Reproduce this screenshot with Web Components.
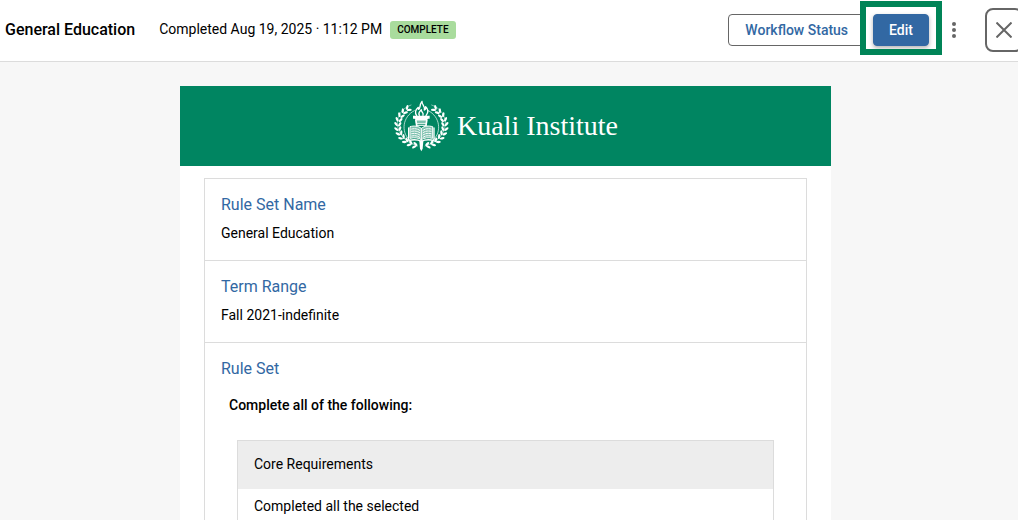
<!DOCTYPE html>
<html lang="en">
<head>
<meta charset="utf-8">
<meta name="viewport" content="width=device-width, initial-scale=1">
<title>General Education</title>
<style>
body {
	margin: 0;
	min-height: 100vh;
	background: #f7f7f7;
	color: #000;
	font: 14px/21px Roboto, "Liberation Sans", sans-serif;
	overflow-x: hidden;
}
</style>
</head>
<body>
<ku-app></ku-app>

<script>
const define = (name, html, setup) => {
	const template = document.createElement('template');
	template.innerHTML = html;

	window.customElements.define(name, class extends HTMLElement {
		connectedCallback() {
			if (!this.shadowRoot) {
				this.attachShadow({ mode: 'open' });
				this.shadowRoot.appendChild(template.content.cloneNode(true));
				setup?.call(this, this.shadowRoot);
			}
		}
	});
};

define('ku-badge', `
<style>
:host {
	display: block;
	padding: 0 7px;
	border-radius: 3px;
	background: #a9dc9d;
	font-size: 10px;
	font-weight: 500;
	line-height: 18px;
}
</style>
<slot></slot>
`);

define('ku-button', `
<style>
:host {
	display: block;
}

button {
	box-sizing: border-box;
	display: block;
	height: 32px;
	padding: 0 16px;
	border: 1px solid #666;
	border-radius: 4px;
	background: #fff;
	color: #3268a3;
	font: inherit;
	font-weight: 500;
	line-height: 30px;
	white-space: nowrap;
	cursor: pointer;
}

:host([primary]) button {
	padding: 0 15px;
	border-color: #3268a3;
	background: #3268a3;
	color: #fff;
	box-shadow: 0 2px 4px rgba(0, 0, 0, .3);
}
</style>
<button type="button"><slot></slot></button>
`);

define('ku-highlight', `
<style>
:host {
	display: block;
	position: relative;
}

/* Frame drawn over whatever is next to the highlighted control */
:host::after {
	content: '';
	position: absolute;
	inset: -13px -13px -9px;
	border: 6px solid #008457;
	pointer-events: none;
}
</style>
<slot></slot>
`);

define('ku-icon-button', `
<style>
:host {
	display: block;
}

button {
	display: flex;
	align-items: center;
	justify-content: center;
	box-sizing: border-box;
	width: 24px;
	height: 44px;
	padding: 0;
	border: 0;
	background: none;
	color: #666;
	cursor: pointer;
}

:host([outlined]) button {
	width: 38px;
	border: 2px solid #666;
	border-radius: 8px;
}
</style>
<button type="button"><slot></slot></button>
`, function (root) {
	root.querySelector('button').setAttribute('aria-label', this.getAttribute('label'));
});

define('ku-toolbar', `
<style>
:host {
	display: flex;
	align-items: center;
	box-sizing: border-box;
	height: 62px;
	padding: 0 0 2px 5px;
	border-bottom: 1px solid #dcdcdc;
	background: #fff;
	overflow: hidden;
}

h1 {
	margin: 0 24px 0 0;
	font-size: 16px;
	font-weight: 500;
	white-space: nowrap;
}

.status,
.actions {
	display: flex;
	align-items: center;
	gap: 8px;
	white-space: nowrap;
}

.actions {
	margin-left: auto;
	margin-right: -5px;
}

.close {
	margin-left: 11px;
}

.menu {
	margin-left: 5px;
}
</style>
<h1>General Education</h1>
<div class="status">
	<span>Completed Aug 19, 2025 · 11:12 PM</span>
	<ku-badge>COMPLETE</ku-badge>
</div>
<div class="actions">
	<ku-button>Workflow Status</ku-button>
	<ku-highlight><ku-button primary>Edit</ku-button></ku-highlight>
	<ku-icon-button class="menu" label="More actions">
		<svg width="4" height="16" viewBox="0 0 4 16" fill="currentColor">
			<circle cx="2" cy="2" r="2"/>
			<circle cx="2" cy="8" r="2"/>
			<circle cx="2" cy="14" r="2"/>
		</svg>
	</ku-icon-button>
	<ku-icon-button class="close" label="Close" outlined>
		<svg width="16" height="16" viewBox="0 0 16 16" fill="none" stroke="currentColor" stroke-width="2">
			<path d="M.5.5l15 15M15.5.5l-15 15"/>
		</svg>
	</ku-icon-button>
</div>
`);

define('ku-crest', `
<style>
:host {
	display: block;
}

svg {
	display: block;
}
</style>
<svg width="56" height="52" viewBox="22 30 168 156" fill="none" stroke="#fff" stroke-linecap="round" stroke-linejoin="round" aria-hidden="true">
	<g class="wreath" fill="#fff" stroke="none"></g>
	<path stroke-width="1.5" d="M76 45C17 66 19 145 96 168M138 45C197 66 195 145 118 168"/>
	<path stroke-width="2" d="M86 62C50 80 46 126 70 148M128 62C164 80 168 126 144 148"/>
	<path stroke-width="4" d="M93 77C85 66 90 59 98 52C97 61 101 60 103 50C103 42 106 38 109 34C108 45 120 49 116 60C121 58 121 54 120 50C130 59 127 69 121 77M101 76C96 69 102 65 107 59C106 68 115 66 112 76"/>
	<path fill="#fff" stroke="none" d="M82 77H132V86H127L123 92H91L87 86H82Z"/>
	<path stroke-width="3" d="M91 96H123M92 101H122M93 106H121"/>
	<path fill="#fff" stroke="none" d="M88 90H93L96 109H91ZM121 90H126L123 109H118Z"/>
	<path fill="#fff" fill-opacity=".5" stroke-width="3" d="M107 115C97 107 85 107 73 110V145C86 142 98 143 107 149C116 143 128 142 141 145V110C129 107 117 107 107 115V149"/>
	<path stroke-width="4" d="M69 114V151C85 148 98 149 107 154C116 149 129 148 145 151V114"/>
	<path stroke-width="3" stroke-dasharray="7 3" d="M78 117Q92 114 102 121M78 124Q92 121 102 128M78 131Q92 128 102 135M78 138Q92 135 102 142M112 121Q122 114 136 117M112 128Q122 121 136 124M112 135Q122 128 136 131M112 142Q122 135 136 138"/>
	<path fill="#fff" stroke="none" d="M101 153L107 150L113 153L111 176L107 184L103 176Z"/>
</svg>
`, root => {
	// Pairs of leaves along both branches, mirrored around the torch
	const leaves = [];
	for (let i = 0; i < 11; i++) {
		const degrees = 106 + i * 13;
		const angle = degrees * Math.PI / 180;
		for (const [rx, ry, turn] of [[76, 66, 48], [65, 57, 118]]) {
			const x = 107 + rx * Math.cos(angle);
			const y = 107 + ry * Math.sin(angle);
			for (const mirror of ['', 'translate(214 0) scale(-1 1) ']) {
				leaves.push(`<ellipse rx="7.5" ry="3.5" transform="${mirror}translate(${x.toFixed(1)} ${y.toFixed(1)}) rotate(${degrees + turn})"/>`);
			}
		}
	}
	root.querySelector('.wreath').innerHTML = leaves.join('');
});

define('ku-banner', `
<style>
:host {
	display: flex;
	align-items: center;
	justify-content: center;
	gap: 8px;
	height: 80px;
	background: #008561;
	color: #fff;
	font: 28px/32px "Liberation Serif", serif;
}
</style>
<ku-crest></ku-crest>
<span>Kuali Institute</span>
`);

define('ku-field', `
<style>
:host {
	display: block;
	padding: 16px;
}

:host(:not(:first-child)) {
	border-top: 1px solid #dcdcdc;
}

h2 {
	margin: 0 0 8px;
	color: #3268a3;
	font-size: 16px;
	font-weight: 400;
	line-height: 20px;
}
</style>
<h2></h2>
<slot></slot>
`, function (root) {
	root.querySelector('h2').textContent = this.getAttribute('label');
});

define('ku-rule', `
<style>
:host {
	display: block;
	padding: 8px;
}

h3 {
	margin: 0 0 24px;
	font-size: 14px;
	font-weight: 500;
	line-height: 21px;
}

.group {
	margin: 0 8px;
	border: 1px solid #dcdcdc;
}

h4 {
	margin: 0;
	padding: 13px 16px 14px;
	background: #ededed;
	font-size: 14px;
	font-weight: 400;
	line-height: 21px;
}

.body {
	padding: 7px 16px;
}
</style>
<h3>Complete all of the following:</h3>
<div class="group">
	<h4>Core Requirements</h4>
	<div class="body">Completed all the selected</div>
</div>
`);

define('ku-app', `
<style>
:host {
	display: flex;
	flex-direction: column;
	height: 100vh;
}

main {
	flex: 1;
	min-height: 0;
	padding: 24px 7px 0 0;
	overflow: hidden;
}

.page {
	max-width: 651px;
	min-height: 100%;
	margin: 0 auto;
	background: #fff;
}

.fields {
	margin: 12px 24px;
	border: 1px solid #dcdcdc;
}

.content {
	display: flow-root;
}
</style>
<ku-toolbar></ku-toolbar>
<main>
	<div class="page">
		<ku-banner></ku-banner>
		<div class="content">
			<div class="fields">
				<ku-field label="Rule Set Name">General Education</ku-field>
				<ku-field label="Term Range">Fall 2021-indefinite</ku-field>
				<ku-field label="Rule Set"><ku-rule></ku-rule></ku-field>
			</div>
		</div>
	</div>
</main>
`);
</script>
</body>
</html>
